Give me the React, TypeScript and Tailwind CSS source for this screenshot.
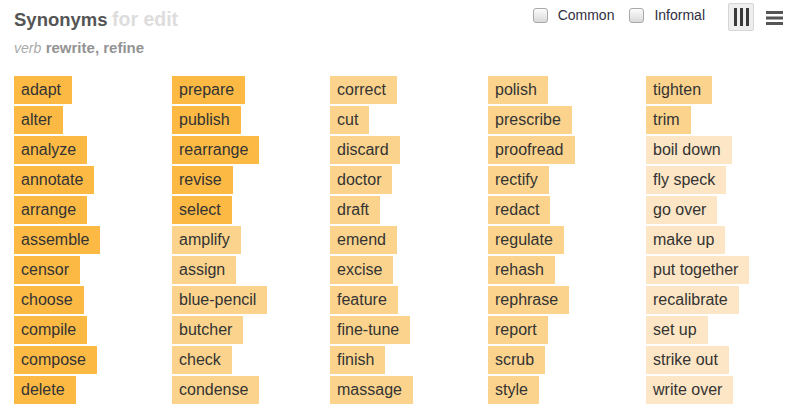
import React from "react";

type Level = 3 | 2 | 1;

const columns: [string, Level][][] = [
  [
    ["adapt", 3], ["alter", 3], ["analyze", 3], ["annotate", 3], ["arrange", 3], ["assemble", 3],
    ["censor", 3], ["choose", 3], ["compile", 3], ["compose", 3], ["delete", 3],
  ],
  [
    ["prepare", 3], ["publish", 3], ["rearrange", 3], ["revise", 3], ["select", 3], ["amplify", 2],
    ["assign", 2], ["blue-pencil", 2], ["butcher", 2], ["check", 2], ["condense", 2],
  ],
  [
    ["correct", 2], ["cut", 2], ["discard", 2], ["doctor", 2], ["draft", 2], ["emend", 2],
    ["excise", 2], ["feature", 2], ["fine-tune", 2], ["finish", 2], ["massage", 2],
  ],
  [
    ["polish", 2], ["prescribe", 2], ["proofread", 2], ["rectify", 2], ["redact", 2], ["regulate", 2],
    ["rehash", 2], ["rephrase", 2], ["report", 2], ["scrub", 2], ["style", 2],
  ],
  [
    ["tighten", 2], ["trim", 2], ["boil down", 1], ["fly speck", 1], ["go over", 1], ["make up", 1],
    ["put together", 1], ["recalibrate", 1], ["set up", 1], ["strike out", 1], ["write over", 1],
  ],
];

const levelBg: Record<Level, string> = {
  3: "bg-[#fcba45]",
  2: "bg-[#fbd38d]",
  1: "bg-[#fde6c5]",
};

function Checkbox({ label }: { label: string }) {
  return (
    <label className="mt-[5px] flex items-start">
      <span className="h-[15px] w-[15px] rounded-[3px] border border-[#a9a9a9] bg-linear-to-b from-[#fbfbfb] to-[#dadada]" />
      <span className="ml-[10px] text-[14px] leading-[14px] text-[#2f2f3f]">{label}</span>
    </label>
  );
}

export default function App() {
  return (
    <div className="w-[793px] h-[418px] bg-white font-['Liberation_Sans',Arial,sans-serif]">
      {/* Header: title + view options */}
      <div className="flex items-start justify-between pl-[14px] pr-[10px]">
        <div>
          <h1 className="pt-[9px] font-bold leading-[21px]">
            <span className="text-[18.5px] text-[#555]">Synonyms</span>{" "}
            <span className="text-[19.5px] text-[#ddd]">for edit</span>
          </h1>
          <div className="mt-[8px] leading-[18px] text-[#939393]">
            <span className="text-[14px] italic text-[#aaa]">verb</span>{" "}
            <span className="text-[15px] font-bold">rewrite, refine</span>
          </div>
        </div>
        <div className="mt-[3px] flex items-start">
          <Checkbox label="Common" />
          <div className="w-[15px]" />
          <Checkbox label="Informal" />
          <button className="ml-[23px] flex h-[28px] w-[26px] items-center justify-center gap-[3px] rounded-[2px] border border-[#d6d6d6] bg-[#eeeeee]">
            <span className="h-[18px] w-[3px] bg-[#3a3a3a]" />
            <span className="h-[18px] w-[3px] bg-[#3a3a3a]" />
            <span className="h-[18px] w-[3px] bg-[#3a3a3a]" />
          </button>
          <svg className="ml-[12px] mt-[8px]" width="17" height="14" viewBox="0 0 17 14">
            <rect x="0" y="0" width="17" height="3" fill="#555" />
            <rect x="0" y="5.5" width="17" height="3" fill="#555" />
            <rect x="0" y="11" width="17" height="3" fill="#555" />
          </svg>
        </div>
      </div>

      {/* Synonym columns */}
      <div className="mt-[19px] flex pl-[14px]">
        {columns.map((col, i) => (
          <ul key={i} className="flex w-[158px] shrink-0 flex-col items-start gap-[2px]">
            {col.map(([word, level]) => (
              <li
                key={word}
                className={`h-[28px] whitespace-nowrap pl-[7px] pr-[11px] text-[16px] leading-[28px] text-[#333] ${levelBg[level]}`}
              >
                {word}
              </li>
            ))}
          </ul>
        ))}
      </div>
    </div>
  );
}
